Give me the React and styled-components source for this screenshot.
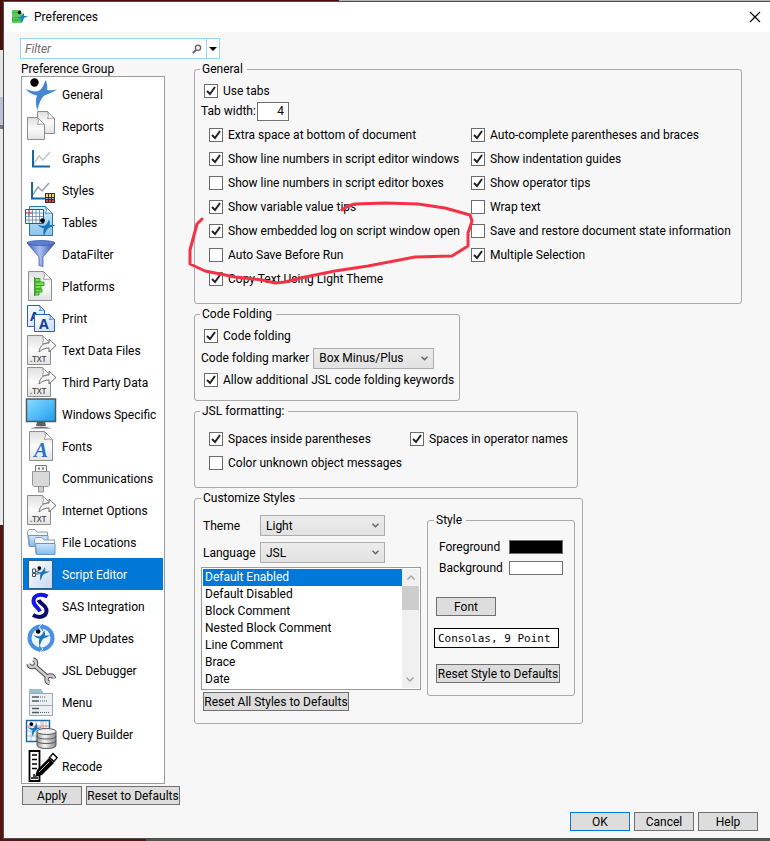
import React, { useState } from "react";

import styled, { createGlobalStyle, css } from "styled-components";

const GlobalStyle = createGlobalStyle`
    * {
        box-sizing: border-box;
    }
    body {
        margin: 0;
        font-family: Roboto, "Open Sans", sans-serif;
        font-size: 12px;
        line-height: 16px;
        color: #000000;
    }
    button, input, select {
        font: inherit;
        color: inherit;
        margin: 0;
    }
`;

const Desktop = styled.div`
    min-height: 100vh;
    padding: 2px 0 3px 4px;
    display: flex;
    background:
        linear-gradient(to right, #4a0f0b 0 44%, #b9b7b6 44%) top / 100% 2px no-repeat,
        linear-gradient(to right, #4c1a14 0 19%, #4d5752 19%) bottom / 100% 3px no-repeat,
        linear-gradient(#4a0f0b 0 50px, #e6e6e6 50px 97px, #bcc2d6 97px 125px, #77777b 125px 129px, #e9e9e7 129px 525px, #551710 525px);
`;

const Dialog = styled.main`
    flex: 1;
    min-width: 0;
    display: flex;
    flex-direction: column;
    background: #f7f7f7;
    box-shadow: 0 0 0 1px #4d4d4d;
`;

const TitleBar = styled.header`
    display: flex;
    align-items: center;
    height: 30px;
    padding: 0 9px 0 8px;
    background: #ffffff;
`;

const Title = styled.h1`
    flex: 1;
    margin: 0 0 0 6px;
    font-size: 12px;
    font-weight: 400;
`;

const CloseButton = styled.button`
    display: flex;
    padding: 0;
    border: 0;
    background: none;
`;

const Content = styled.div`
    flex: 1;
    display: flex;
    flex-direction: column;
    padding: 6px 12px 7px 16px;
`;

const FilterBox = styled.div`
    display: flex;
    align-items: center;
    width: 200px;
    height: 21px;
    margin-bottom: 1px;
    border: 1px solid #99d1f0;
    background: #ffffff;
`;

const FilterInput = styled.input`
    flex: 1;
    min-width: 0;
    height: 19px;
    padding: 0 4px;
    border: 0;
    background: none;
    font-style: italic;
    outline: 0;
    &::placeholder {
        color: #6d6d6d;
        opacity: 1;
    }
`;

const FilterMenu = styled.button`
    display: flex;
    align-items: center;
    justify-content: center;
    width: 13px;
    height: 19px;
    margin-left: 4px;
    padding: 0;
    border: 0;
    border-left: 1px solid #99d1f0;
    background: #ffffff;
`;

const Columns = styled.div`
    display: flex;
    align-items: flex-start;
    gap: 14px;
`;

const Sidebar = styled.div`
    flex: 0 0 160px;
    padding-left: 1px;
`;

const SidebarTitle = styled.h2`
    margin: 0;
    height: 16px;
    font-size: 12px;
    font-weight: 400;
    line-height: 18px;
`;

const GroupList = styled.ul`
    width: 144px;
    margin: 0 0 2px;
    padding: 1px;
    list-style: none;
    border: 1px solid #9b9b9b;
    background: #ffffff;
`;

const GroupButton = styled.button`
    display: flex;
    align-items: center;
    gap: 5px;
    width: 100%;
    height: 32px;
    padding: 0 0 0 2px;
    border: 0;
    background: ${(p) => (p.$active ? "#0078d7" : "none")};
    color: ${(p) => (p.$active ? "#ffffff" : "#000000")};
    line-height: 18px;
    text-align: left;
    white-space: nowrap;
    > span {
        padding-top: 2px;
    }
`;

const Icon = styled.svg`
    flex: none;
    display: block;
    overflow: visible;
`;

const ButtonRow = styled.div`
    display: flex;
    gap: 4px;
    padding-left: ${(p) => p.$indent || 0}px;
    justify-content: ${(p) => (p.$end ? "flex-end" : "flex-start")};
    margin-top: ${(p) => (p.$end ? "auto" : 0)};
`;

const Button = styled.button`
    width: ${(p) => p.$width || 60}px;
    height: 19px;
    padding: 0;
    border: 1px solid ${(p) => (p.$default ? "#0078d7" : "#707070")};
    background: #dddddd;
    line-height: 16px;
    white-space: nowrap;
`;

const Panels = styled.div`
    flex: 1;
    min-width: 0;
    padding-right: 16px;
`;

const Group = styled.fieldset`
    position: relative;
    min-width: 0;
    max-width: ${(p) => (p.$max ? p.$max + "px" : "none")};
    margin: 0 0 1px;
    padding: ${(p) => p.$pad};
    border: 1px solid #a9a9a9;
    border-radius: 3px;
`;

const Legend = styled.legend`
    height: 18px;
    padding: 0 4px 0 2px;
    line-height: 18px;
`;

const Line = styled.div`
    display: flex;
    align-items: center;
    gap: ${(p) => p.$gap || 0}px;
    height: ${(p) => p.$height || 22}px;
    padding-left: ${(p) => p.$indent || 0}px;
    white-space: nowrap;
`;

const CheckGrid = styled.div`
    display: grid;
    grid-template-columns: ${(p) => p.$first}px 1fr;
    grid-auto-rows: minmax(24px, auto);
    align-items: center;
    padding: 2px 0 0 9px;
`;

const CheckStack = styled.div`
    display: grid;
    grid-auto-rows: 24px;
    align-items: center;
    align-self: start;
`;

const CheckLabel = styled.label`
    display: flex;
    align-items: center;
    gap: 5px;
    white-space: nowrap;
`;

const CheckBox = styled.input`
    appearance: none;
    flex: none;
    width: 14px;
    height: 14px;
    border: 1px solid #6b6b6b;
    background: #ffffff;
    &:checked {
        background: #ffffff
            url("data:image/svg+xml,%3Csvg xmlns='http://www.w3.org/2000/svg' viewBox='0 0 12 12'%3E%3Cpath d='M2 6l3 3 5-7' fill='none' stroke='%23222' stroke-width='2'/%3E%3C/svg%3E")
            center / 12px 12px no-repeat;
    }
`;

const NumberInput = styled.input`
    width: 32px;
    height: 19px;
    padding: 0 4px;
    border: 1px solid #707070;
    background: #ffffff;
    text-align: right;
`;

const SelectWrap = styled.div`
    display: grid;
    align-items: center;
    width: ${(p) => p.$width}px;
    > * {
        grid-area: 1 / 1;
    }
    > svg {
        justify-self: end;
        margin-right: 6px;
        pointer-events: none;
    }
`;

const Select = styled.select`
    appearance: none;
    width: 100%;
    height: 21px;
    padding: 0 5px;
    border: 1px solid #adadad;
    border-radius: 0;
    background: linear-gradient(#ececec, #e2e2e2);
`;

const StyleColumns = styled.div`
    display: flex;
    align-items: flex-start;
    justify-content: space-between;
`;

const StyleForm = styled.div`
    display: flex;
    flex-direction: column;
    width: 220px;
    padding-top: 8px;
`;

const FormRow = styled.div`
    display: grid;
    grid-template-columns: 57px auto;
    justify-content: start;
    align-items: center;
    height: 21px;
    margin-bottom: ${(p) => (p.$last ? 4 : 6)}px;
    padding-left: 2px;
`;

const ListBox = styled.div`
    display: flex;
    height: 123px;
    margin-bottom: 2px;
    padding: 1px;
    border: 1px solid #9b9b9b;
    background: #ffffff;
`;

const ListSelect = styled.select`
    flex: 1;
    min-width: 0;
    height: 119px;
    padding: 0;
    border: 0;
    outline: 0;
    border-radius: 0;
    background: #ffffff;
    scrollbar-width: none;
    option {
        height: 17px;
        min-height: 17px;
        padding: 1px 2px 0;
        line-height: 16px;
    }
    option:checked {
        background: linear-gradient(#0078d7, #0078d7);
        -webkit-text-fill-color: #ffffff;
    }
`;

const ScrollBar = styled.div`
    display: flex;
    flex-direction: column;
    width: 17px;
    background: #f0f0f0;
`;

const ScrollArrow = styled.button`
    display: flex;
    align-items: center;
    justify-content: center;
    height: 17px;
    padding: 0;
    border: 0;
    background: none;
    ${(p) =>
        p.$down &&
        css`
            margin-top: auto;
            transform: rotate(180deg);
        `}
`;

const ScrollThumb = styled.div`
    height: 24px;
    background: #cdcdcd;
`;

const StyleGroup = styled(Group)`
    flex: 0 0 148px;
    margin: 4px 7px 0 0;
`;

const SwatchRow = styled.div`
    display: grid;
    grid-template-columns: 70px 54px;
    align-items: center;
    height: 21px;
    padding-left: 5px;
`;

const Swatch = styled.button`
    height: 14px;
    padding: 0;
    border: 1px solid #707070;
    background: ${(p) => p.$color};
`;

const StyleActions = styled.div`
    display: flex;
    flex-direction: column;
    align-items: flex-start;
    gap: 12px;
    padding: 19px 0 0 2px;
`;

const FontSample = styled.input`
    width: 125px;
    height: 20px;
    margin: 0 0 4px -2px;
    padding: 0 3px;
    border: 1px solid #000000;
    background: #ffffff;
    font-family: Consolas, "DejaVu Sans Mono", monospace;
    font-size: 11px;
`;

const Scribble = styled.svg`
    position: absolute;
    left: -7px;
    top: 122px;
    pointer-events: none;
`;

const Figure = ({ fill = "#1677ba", transform }) => (
    <g transform={transform}>
        <path
            d="M1 11C6 13 10 14 13.500 13C17 11 19 7 20.500 2C22.500 6 22.500 9 22 12C25 12.500 29 12 32 11.500C28 14.500 23 16 19.500 17.500C16 20 14 26 12.500 32C10.500 27 10.500 21 12 17.500C8 17 4 15 1 11Z"
            fill={fill}
        />
        <circle cx="9.500" cy="4.500" r="4.200" fill="#000" />
    </g>
);

const Page = ({ x, y, w, h, fold = 7, fill = "url(#paper)", stroke = "#8c8c8c" }) => (
    <>
        <path d={`M${x} ${y}h${w - fold}l${fold} ${fold}v${h - fold}h${-w}z`} fill={fill} stroke={stroke} />
        <path d={`M${x + w - fold} ${y}q2 4 0 ${fold}q5 -1 ${fold} 0z`} fill="#fff" stroke={stroke} strokeWidth=".8" />
    </>
);

const TextFile = () => (
    <>
        <Page x={2.5} y={1.5} w={23} h={29} fold={8} />
        <path
            d="M14 18c1-7 5-9 10-9V5l7 6.500-7 6.500v-4c-4 0-6 1-10 4z"
            fill="#f5f5f5"
            stroke="#6b6b6b"
        />
        <text x="5" y="28" fontFamily="Open Sans" fontSize="8" fontWeight="600" fill="#4c4c4c">
            .TXT
        </text>
    </>
);

const Folder = ({ x, y }) => (
    <g transform={`translate(${x} ${y})`}>
        <path d="M.5 4V2.500L2 .5h6L10 3h10.500v14H2z" fill="#f3f4f5" stroke="#9a9fa5" />
        <path d="M1.500 6.500h19.500v11H2.500z" fill="url(#folder)" stroke="#7295b5" />
    </g>
);

const wrench = "M8 5.500a3.800 3.800 0 1 1-4.500 4.500M10 12l12 10.500M29 24.500a3.800 3.800 0 1 0-4.500 4.500";

const icons = {
    General: <Figure fill="#4486cf" />,
    Reports: (
        <>
            <Page x={12.5} y={1.5} w={17} h={22} />
            <Page x={2.5} y={7.5} w={17} h={22} />
        </>
    ),
    Graphs: (
        <>
            <path d="M8 23l6-9 4 4 7-8" fill="none" stroke="#c2c6c9" strokeWidth="1.500" />
            <path d="M8 8v16.500h17" fill="none" stroke="#16679c" strokeWidth="2" />
        </>
    ),
    Styles: (
        <>
            <path d="M7 22l6-9 4 4 7-8" fill="none" stroke="#9a9fa3" strokeWidth="1.500" />
            <path d="M7 8v16.500h14" fill="none" stroke="#16679c" strokeWidth="2" />
            <path d="M20 19h10v10H20z" fill="#333" />
            <path d="M21 20h2v3h-2zM24 20h2v3h-2zM27 20h2v3h-2z" fill="#f1d65b" />
            <path d="M21 24h2v1h-2zM24 24h2v1h-2zM27 24h2v1h-2z" fill="#7fb2e0" />
            <path d="M21 26h2v2h-2zM24 26h2v2h-2zM27 26h2v2h-2z" fill="#d94a4a" />
        </>
    ),
    Tables: (
        <>
            <Page x={4.5} y={0.5} w={23} h={29} fill="url(#sky)" stroke="#2c76ae" />
            <path d="M.5 3.500h18v14H.5z" fill="#fff" stroke="#1f5c92" />
            <path d="M4 4v13M7.500 4v13M11 4v13M14.500 4v13M1 7h17M1 10.500h17M1 14h17" stroke="#5f7fa0" strokeWidth=".8" />
            <path d="M4 4v6M1 7h7" stroke="#e04545" />
            <Figure transform="translate(12 12) scale(.58)" />
        </>
    ),
    DataFilter: (
        <>
            <path d="M2 5l12 14v8.500l4 1V19L30 5z" fill="url(#funnel)" stroke="#2f4d9e" strokeWidth=".7" />
            <ellipse cx="16" cy="5" rx="14" ry="2.500" fill="#5c7fd0" stroke="#34529f" strokeWidth=".7" />
        </>
    ),
    Platforms: (
        <>
            <Page x={3.5} y={1.5} w={23} h={29} fold={8} />
            <path d="M9.500 7v19" stroke="#3f8a2c" />
            <path
                d="M10 8.500h5v3.500h-5zM10 12h9v3.500h-9zM10 15.500h6v3.500h-6zM10 19h7v3h-7zM10 22h4v3h-4z"
                fill="#6fe04f"
                stroke="#43a02b"
            />
        </>
    ),
    Print: (
        <>
            <Page x={2.5} y={3.5} w={17} h={21} fold={5} fill="url(#print)" stroke="#2b5fb5" />
            <text x="5" y="19" fontFamily="Open Sans" fontSize="13" fontWeight="700" fill="#143f95">
                A
            </text>
            <Page x={9.5} y={12.5} w={20} h={17} fold={5} fill="url(#print)" stroke="#2b5fb5" />
            <text x="14" y="27" fontFamily="Open Sans" fontSize="14" fontWeight="700" fill="#143f95">
                A
            </text>
        </>
    ),
    "Text Data Files": <TextFile />,
    "Third Party Data": <TextFile />,
    "Windows Specific": (
        <>
            <path d="M12 24h8l1 4H11z" fill="#5b6064" />
            <path d="M5 30.500q11-4 22 0z" fill="#6f7478" />
            <path d="M1.500 1h29v22.500h-29z" fill="url(#screen)" stroke="#51575c" strokeWidth="1.500" />
        </>
    ),
    Fonts: (
        <>
            <Page x={4.5} y={1.5} w={23} h={29} fold={8} />
            <text x="9" y="27" fontFamily="Liberation Serif" fontSize="21" fontStyle="italic" fontWeight="700" fill="#2a72c4">
                A
            </text>
        </>
    ),
    Communications: (
        <>
            <path d="M10.500 3.500h11v6h-11z" fill="#f4f4f4" stroke="#747474" />
            <path d="M13 5.500h2v2h-2zM17 5.500h2v2h-2z" fill="#777" />
            <path d="M7.500 9.500h17V23l-1.500 1.500h-14L7.500 23z" fill="#d9d9d9" stroke="#989898" />
            <path d="M13.500 24.500h5v5.500h-5z" fill="#cfcfcf" stroke="#8f8f8f" />
        </>
    ),
    "Internet Options": <TextFile />,
    "File Locations": (
        <>
            <Folder x={2} y={3} />
            <Folder x={9} y={11} />
        </>
    ),
    "Script Editor": (
        <>
            <path d="M3.500 2.500h24v28h-24z" fill="url(#script)" stroke="#2c5e91" />
            <Figure transform="translate(10 8) scale(.46)" />
            <path d="M7.500 11h3v3.500h-3zM7.500 15.500h3v3h-3zM10.500 13.500l4-1M10.500 16h3" fill="none" stroke="#4a5158" />
        </>
    ),
    "SAS Integration": (
        <>
            <path d="M22.500 6.500C16 3 8.500 5 8.500 11C8.500 16 13 17 15 21.500" fill="none" stroke="#1414ee" strokeWidth="4" />
            <path d="M13.500 10C15 14 21.500 15 21.500 20.500C21.500 27 14 28.500 8 25" fill="none" stroke="#0a0a6e" strokeWidth="4" />
        </>
    ),
    "JMP Updates": (
        <>
            <circle cx="16" cy="16" r="11.500" fill="#eef6ff" stroke="#4a90e2" strokeWidth="4" />
            <path d="M18 1l-4 4 4 5M14 31l4-4-4-5" fill="#4a90e2" stroke="#fff" strokeWidth=".8" />
            <Figure transform="translate(8 7) scale(.54)" />
        </>
    ),
    "JSL Debugger": (
        <>
            <path d={wrench} fill="none" stroke="#4f4f4f" strokeWidth="4.400" />
            <path d={wrench} fill="none" stroke="#cccccc" strokeWidth="2.400" />
        </>
    ),
    Menu: (
        <>
            <path d="M4 3h12l2 3v2H4z" fill="#9cc0d0" />
            <path d="M4.500 7.500h23v22h-23z" fill="#eef1f4" stroke="#a0a6ad" />
            <path d="M5 19.500h22" stroke="#a0a6ad" />
            <path d="M7 11h7M7 15h7M7 22.500h7M7 26.500h7" stroke="#555b60" strokeWidth="1.500" />
            <path d="M15 11h5M15 15h8M15 26.500h10" stroke="#555b60" strokeWidth="1.200" strokeDasharray="1 1" />
        </>
    ),
    "Query Builder": (
        <>
            <path d="M1.500 2.500h23v21h-23z" fill="#fff" stroke="#2467a0" strokeWidth="1.500" />
            <path d="M6 3v20M11 3v20M16 3v20M21 3v20M2 13h22M2 18h22" stroke="#8eb3d8" strokeWidth=".8" />
            <path d="M2 8h22M18 3v10" stroke="#e08a8a" />
            <Figure transform="translate(2 4) scale(.46)" />
            <path d="M12 13.500V27q0 3.500 9.500 3.500T31 27V13.500z" fill="url(#metal)" stroke="#555" />
            <path d="M12 18q0 3 9.500 3T31 18M12 22.500q0 3 9.500 3t9.500-3" fill="none" stroke="#555" />
            <ellipse cx="21.500" cy="13.500" rx="9.500" ry="3" fill="#f1f1f1" stroke="#555" />
        </>
    ),
    Recode: (
        <>
            <path d="M4.500 1h10v30h-10z" fill="#fff" stroke="#000" strokeWidth="1.800" />
            <path d="M7 5h5M7 9.500h5M7 14h5M7 18.500h5M6 28h7M9 24v3" stroke="#000" strokeWidth="1.400" />
            <path d="M10 27l2-7L24 8l5 5-12 12z" fill="#000" />
            <path d="M24.500 7.500L28 3.500l4 4-3 4z" fill="#fff" stroke="#000" strokeWidth="1.500" />
            <path d="M25.500 6.500l4 4M27 5l4 4M14 22l10-10" stroke="#fff" strokeWidth=".7" />
            <path d="M25 8l4 4" stroke="#000" />
        </>
    ),
};

const Gradients = () => (
    <Icon width="0" height="0" aria-hidden="true">
        <defs>
            <linearGradient id="paper" x1="0" y1="0" x2="0" y2="1">
                <stop offset="0" stopColor="#dedede" />
                <stop offset=".5" stopColor="#fbfbfb" />
                <stop offset="1" stopColor="#e2e2e2" />
            </linearGradient>
            <linearGradient id="sky" x1="0" y1="0" x2="0" y2="1">
                <stop offset="0" stopColor="#d9edfa" />
                <stop offset="1" stopColor="#8cc3ea" />
            </linearGradient>
            <linearGradient id="print" x1="0" y1="0" x2="1" y2="1">
                <stop offset="0" stopColor="#ffffff" />
                <stop offset="1" stopColor="#c8dcfa" />
            </linearGradient>
            <linearGradient id="script" x1="0" y1="0" x2="1" y2="1">
                <stop offset="0" stopColor="#ffffff" />
                <stop offset="1" stopColor="#c5d9ef" />
            </linearGradient>
            <linearGradient id="funnel">
                <stop offset="0" stopColor="#3b59b4" />
                <stop offset=".45" stopColor="#a9bff0" />
                <stop offset="1" stopColor="#2f4ba5" />
            </linearGradient>
            <linearGradient id="screen" x1="0" y1="0" x2="1" y2="1">
                <stop offset="0" stopColor="#8fdcff" />
                <stop offset="1" stopColor="#1a9ef0" />
            </linearGradient>
            <linearGradient id="folder" x1="0" y1="0" x2="0" y2="1">
                <stop offset="0" stopColor="#cde6fb" />
                <stop offset="1" stopColor="#7fbdf0" />
            </linearGradient>
            <linearGradient id="metal">
                <stop offset="0" stopColor="#9a9a9a" />
                <stop offset=".4" stopColor="#f5f5f5" />
                <stop offset="1" stopColor="#8a8a8a" />
            </linearGradient>
        </defs>
    </Icon>
);

const Chevron = ({ color = "#606060" }) => (
    <svg width="7" height="5" viewBox="0 0 7 5" aria-hidden="true">
        <path d="M.5.8l3 3 3-3" fill="none" stroke={color} strokeWidth="1.400" />
    </svg>
);

const Check = ({ label, on }) => (
    <CheckLabel>
        <CheckBox type="checkbox" defaultChecked={on} />
        {label}
    </CheckLabel>
);

const Picker = ({ id, width, value }) => (
    <SelectWrap $width={width}>
        <Select id={id} defaultValue={value}>
            <option>{value}</option>
        </Select>
        <Chevron />
    </SelectWrap>
);

const generalLeft = [
    ["Extra space at bottom of document", true],
    ["Show line numbers in script editor windows", true],
    ["Show line numbers in script editor boxes", false],
    ["Show variable value tips", true],
    ["Show embedded log on script window open", true],
    ["Auto Save Before Run", false],
    ["Copy Text Using Light Theme", true],
];

const generalRight = [
    ["Auto-complete parentheses and braces", true],
    ["Show indentation guides", true],
    ["Show operator tips", true],
    ["Wrap text", false],
    ["Save and restore document state information", false],
    ["Multiple Selection", true],
];

const styleNames = [
    "Default Enabled",
    "Default Disabled",
    "Block Comment",
    "Nested Block Comment",
    "Line Comment",
    "Brace",
    "Date",
];

export default function App() {
    const [active, setActive] = useState("Script Editor");

    return (
        <Desktop>
            <GlobalStyle />
            <Dialog>
                <TitleBar>
                    <Icon width="16" height="16" viewBox="0 0 16 16" aria-hidden="true">
                        <path d="M0 1h9v3H0zM0 4.500h12v3H0zM0 8h10v3H0zM0 11h9v3H0z" fill="#4fd050" />
                        <path d="M0 4h9M0 8h10M0 11h9" stroke="#2c9b3a" />
                        <path d="M5 8c3 1 5-1 7-4l0 3 4 0-4 2c-1 2-1 4-3 5V9c-2 1-3 0-4-1z" fill="#1780c4" />
                        <circle cx="7.500" cy="3.500" r="1.800" fill="#000" />
                    </Icon>
                    <Title>Preferences</Title>
                    <CloseButton aria-label="Close">
                        <svg width="12" height="12" viewBox="0 0 12 12">
                            <path d="M1 1l10 10M11 1L1 11" stroke="#000" strokeWidth="1.200" />
                        </svg>
                    </CloseButton>
                </TitleBar>
                <Content>
                    <FilterBox>
                        <FilterInput placeholder="Filter" aria-label="Filter" />
                        <svg width="10" height="10" viewBox="0 0 10 10" aria-hidden="true">
                            <circle cx="6" cy="3.800" r="2.600" fill="none" stroke="#666" strokeWidth="1.400" />
                            <path d="M4 6L.8 9" stroke="#666" strokeWidth="1.800" />
                        </svg>
                        <FilterMenu aria-label="Filter options">
                            <svg width="8" height="4" viewBox="0 0 8 4">
                                <path d="M0 0h8L4 4z" />
                            </svg>
                        </FilterMenu>
                    </FilterBox>
                    <Columns>
                        <Sidebar>
                            <SidebarTitle>Preference Group</SidebarTitle>
                            <GroupList>
                                {Object.keys(icons).map((name) => (
                                    <li key={name}>
                                        <GroupButton $active={name === active} onClick={() => setActive(name)}>
                                            <Icon width="32" height="32" viewBox="0 0 32 32" aria-hidden="true">
                                                {icons[name]}
                                            </Icon>
                                            <span>{name}</span>
                                        </GroupButton>
                                    </li>
                                ))}
                            </GroupList>
                            <ButtonRow $indent={1}>
                                <Button>Apply</Button>
                                <Button $width={94}>Reset to Defaults</Button>
                            </ButtonRow>
                        </Sidebar>
                        <Panels>
                            <Group $pad="3px 5px 12px">
                                <Legend>General</Legend>
                                <Line $height={20} $indent={4}>
                                    <Check label="Use tabs" on />
                                </Line>
                                <Line $height={20} $gap={1} $indent={1}>
                                    <label htmlFor="tab-width">Tab width:</label>
                                    <NumberInput id="tab-width" defaultValue="4" />
                                </Line>
                                <CheckGrid $first={262}>
                                    <CheckStack>
                                        {generalLeft.map(([label, on]) => (
                                            <Check key={label} label={label} on={on} />
                                        ))}
                                    </CheckStack>
                                    <CheckStack>
                                        {generalRight.map(([label, on]) => (
                                            <Check key={label} label={label} on={on} />
                                        ))}
                                    </CheckStack>
                                </CheckGrid>
                                <Scribble width="290" height="86" viewBox="188 200 290 86" aria-hidden="true">
                                    <path
                                        d="M202 219L197 224L190 250L190 264L205 271L235 277L262 280L275 283L285 282L305 277L335 271L368 266L415 257L452 256L468 246L468 233L472 221L470 215L445 208L418 204L385 203L355 204L348 206L342 210"
                                        fill="none"
                                        stroke="#f23347"
                                        strokeWidth="3"
                                        strokeLinejoin="round"
                                        strokeLinecap="round"
                                    />
                                </Scribble>
                            </Group>
                            <Group $pad="2px 5px 9px" $max={266}>
                                <Legend>Code Folding</Legend>
                                <Line $indent={4}>
                                    <Check label="Code folding" on />
                                </Line>
                                <Line $gap={4} $indent={1}>
                                    <label htmlFor="marker">Code folding marker</label>
                                    <Picker id="marker" width={121} value="Box Minus/Plus" />
                                </Line>
                                <Line $indent={4}>
                                    <Check label="Allow additional JSL code folding keywords" on />
                                </Line>
                            </Group>
                            <Group $pad="5px 5px 12px" $max={384}>
                                <Legend>JSL formatting:</Legend>
                                <CheckGrid $first={201}>
                                    <Check label="Spaces inside parentheses" on />
                                    <Check label="Spaces in operator names" on />
                                    <Check label="Color unknown object messages" />
                                </CheckGrid>
                            </Group>
                            <Group $pad="0 0 12px 6px" $max={389}>
                                <Legend>Customize Styles</Legend>
                                <StyleColumns>
                                    <StyleForm>
                                        <FormRow>
                                            <label htmlFor="theme">Theme</label>
                                            <Picker id="theme" width={125} value="Light" />
                                        </FormRow>
                                        <FormRow $last>
                                            <label htmlFor="language">Language</label>
                                            <Picker id="language" width={125} value="JSL" />
                                        </FormRow>
                                        <ListBox>
                                            <ListSelect size={7} defaultValue="Default Enabled" aria-label="Style names">
                                                {styleNames.map((name) => (
                                                    <option key={name}>{name}</option>
                                                ))}
                                            </ListSelect>
                                            <ScrollBar>
                                                <ScrollArrow aria-label="Scroll up">
                                                    <svg width="8" height="5" viewBox="0 0 8 5">
                                                        <path d="M.5 4.500L4 1l3.500 3.500" fill="none" stroke="#a0a0a0" strokeWidth="1.400" />
                                                    </svg>
                                                </ScrollArrow>
                                                <ScrollThumb />
                                                <ScrollArrow $down aria-label="Scroll down">
                                                    <svg width="8" height="5" viewBox="0 0 8 5">
                                                        <path d="M.5 4.500L4 1l3.500 3.500" fill="none" stroke="#a0a0a0" strokeWidth="1.400" />
                                                    </svg>
                                                </ScrollArrow>
                                            </ScrollBar>
                                        </ListBox>
                                        <ButtonRow $indent={2}>
                                            <Button $width={146}>Reset All Styles to Defaults</Button>
                                        </ButtonRow>
                                    </StyleForm>
                                    <StyleGroup as="fieldset" $pad="7px 6px 12px">
                                        <Legend>Style</Legend>
                                        <SwatchRow>
                                            <span>Foreground</span>
                                            <Swatch $color="#000000" aria-label="Foreground" />
                                        </SwatchRow>
                                        <SwatchRow>
                                            <span>Background</span>
                                            <Swatch $color="#ffffff" aria-label="Background" />
                                        </SwatchRow>
                                        <StyleActions>
                                            <Button>Font</Button>
                                            <FontSample readOnly value="Consolas, 9 Point" aria-label="Current font" />
                                            <Button $width={124}>Reset Style to Defaults</Button>
                                        </StyleActions>
                                    </StyleGroup>
                                </StyleColumns>
                            </Group>
                        </Panels>
                    </Columns>
                    <ButtonRow $end>
                        <Button $default>OK</Button>
                        <Button>Cancel</Button>
                        <Button>Help</Button>
                    </ButtonRow>
                </Content>
            </Dialog>
            <Gradients />
        </Desktop>
    );
}
